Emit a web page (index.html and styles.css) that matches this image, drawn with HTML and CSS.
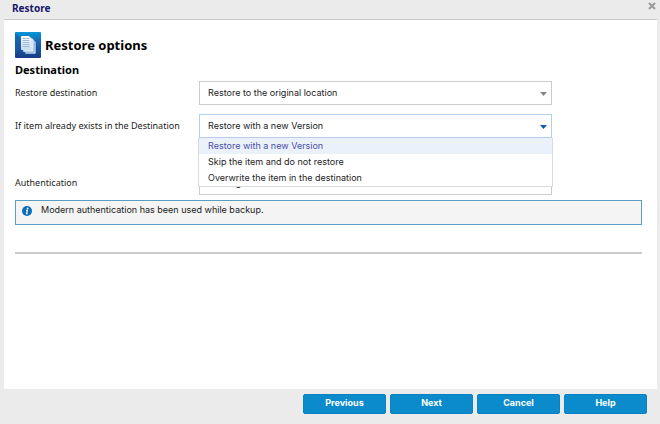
FILE: index.html
```html
<!DOCTYPE html>
<html lang="en">
<head>
<meta charset="utf-8">
<title>Restore</title>
<link rel="stylesheet" href="styles.css">
</head>
<body>
<div class="dialog">
  <header class="titlebar">
    <h1 class="titlebar-text">Restore</h1>
    <button class="close" type="button" aria-label="Close">
      <svg width="8" height="8" viewBox="0 0 8 8"><path d="M1 1L7 7M7 1L1 7" stroke="#999" stroke-width="2"/></svg>
    </button>
  </header>
  <main class="content">
    <div class="heading">
      <svg class="heading-icon" viewBox="0 0 26 26" aria-hidden="true">
        <defs>
          <linearGradient id="tile" x1="0" y1="0" x2="0" y2="1"><stop offset="0" stop-color="#0796d8"/><stop offset=".35" stop-color="#1769b4"/><stop offset="1" stop-color="#163b86"/></linearGradient>
          <linearGradient id="sheet" x1="0" y1="0" x2="0" y2="1"><stop offset="0" stop-color="#fff"/><stop offset="1" stop-color="#c5dcf0"/></linearGradient>
        </defs>
        <rect width="26" height="26" rx="1" fill="url(#tile)"/>
        <path d="M0 1L9 10L0 23Z" fill="#1a5ba9" opacity=".6"/>
        <path d="M11 8h8l2 2v11q0 1-1 1H11q-1 0-1-1V9q0-1 1-1z" fill="#b9d1ea" stroke="#174c91" stroke-width=".5"/>
        <path d="M9 6h8l2 2v11q0 1-1 1H9q-1 0-1-1V7q0-1 1-1z" fill="#d9e8f6" stroke="#5a88bd" stroke-width=".5"/>
        <path d="M7 4h7l2 2v11q0 1-1 1H7q-1 0-1-1V5q0-1 1-1z" fill="url(#sheet)"/>
        <path d="M7.500 6.500h7M7.500 8.500h7M7.500 10.500h7M7.500 12.500h7M7.500 14.500h7" stroke="#8dadcf" stroke-width=".8"/>
      </svg>
      <h2 class="heading-text">Restore options</h2>
    </div>
    <h3 class="section">Destination</h3>
    <form class="form">
      <div class="row">
        <label class="label" for="dest">Restore destination</label>
        <div class="field">
          <select class="select" id="dest"><option>Restore to the original location</option></select>
          <svg class="arrow" viewBox="0 0 7 4" aria-hidden="true"><path d="M0 0H7L3.500 4Z"/></svg>
        </div>
      </div>
      <div class="row row-tall">
        <label class="label" for="exists">If item already exists in the Destination</label>
        <div class="field">
          <select class="select select-open" id="exists"><option>Restore with a new Version</option><option>Skip the item and do not restore</option><option>Overwrite the item in the destination</option></select>
          <svg class="arrow arrow-open" viewBox="0 0 7 4" aria-hidden="true"><path d="M0 0H7L3.500 4Z"/></svg>
          <ul class="menu" role="listbox" aria-label="If item already exists in the Destination">
            <li class="option option-active" role="option" aria-selected="true">Restore with a new Version</li>
            <li class="option" role="option">Skip the item and do not restore</li>
            <li class="option" role="option">Overwrite the item in the destination</li>
          </ul>
        </div>
      </div>
      <div class="row">
        <label class="label" for="auth">Authentication</label>
        <div class="field">
          <select class="select" id="auth"><option>Existing</option></select>
        </div>
      </div>
    </form>
    <div class="notice">
      <svg class="notice-icon" viewBox="0 0 10 10" aria-hidden="true"><circle cx="5" cy="5" r="5" fill="#0b6db7"/><circle cx="5.600" cy="2.500" r=".9" fill="#fff"/><path d="M4 4.300H5.300L4.600 7.700H5.600" fill="none" stroke="#fff" stroke-width="1.200"/></svg>
      <p class="notice-text">Modern authentication has been used while backup.</p>
    </div>
    <hr class="rule">
  </main>
  <footer class="footer">
    <button class="button" type="button">Previous</button>
    <button class="button" type="button">Next</button>
    <button class="button" type="button">Cancel</button>
    <button class="button" type="button">Help</button>
  </footer>
</div>
</body>
</html>
```
FILE: styles.css
```css
* { box-sizing: border-box; }
body {
  margin: 0;
  background: #ebebeb;
  color: #222;
  font: 9px/16px Inter, "Liberation Sans", sans-serif;
}
h1, h2, h3, p, ul { margin: 0; padding: 0; }
.dialog {
  display: flex;
  flex-direction: column;
  min-height: 100vh;
  padding: 0 3px 0 4px;
}
.titlebar {
  display: flex;
  justify-content: space-between;
  align-items: flex-start;
  height: 19px;
  padding-left: 8px;
}
.titlebar-text {
  color: #17176b;
  font: bold 10px/16px "Noto Sans", sans-serif;
}
.close {
  display: flex;
  margin: 1px 0 0;
  padding: 1px;
  border: 0;
  background: none;
}
.content {
  flex: 1;
  padding: 12px 15px 0 11px;
  border-top: 1px solid #c9c9c9;
  background: #fff;
}
.heading { display: flex; align-items: center; gap: 4px; }
.heading-icon { width: 26px; height: 26px; }
.heading-text {
  color: #000;
  font: bold 13px/24px "Noto Sans", sans-serif;
}
.section {
  margin: 4px 0 3px;
  color: #000;
  font: bold 11px/16px "Noto Sans", sans-serif;
}
.row {
  display: grid;
  grid-template-columns: 184px minmax(0, 353px);
  height: 33px;
}
.row-tall { height: 57px; }
.label {
  color: #222;
  font: 9px/24px "Noto Sans", sans-serif;
}
.field { position: relative; }
.select {
  display: block;
  appearance: none;
  width: 100%;
  height: 24px;
  padding: 0 20px 0 8px;
  border: 1px solid #ccc;
  border-radius: 0;
  background: #fff;
  color: #222;
  font: inherit;
}
.select-open { border-color: #b4cfe9; }
.arrow {
  position: absolute;
  top: 11px;
  right: 5px;
  width: 7px;
  height: 4px;
  fill: #84898e;
  pointer-events: none;
}
.arrow-open { fill: #0c5ba6; }
.menu {
  position: absolute;
  top: 24px;
  right: -1px;
  left: -1px;
  z-index: 1;
  border: 1px solid #d5dae0;
  border-top: 0;
  background: #fff;
  list-style: none;
}
.option { padding: 0 9px; }
.option-active { background: #eaf1fb; color: #4a4fa8; }
.notice {
  display: flex;
  gap: 9px;
  height: 25px;
  margin-top: -4px;
  padding: 1px 6px;
  border: 1px solid #5a9fc0;
  background: #f4f4f4;
}
.notice-icon { width: 10px; height: 10px; margin-top: 4px; }
.notice-text { line-height: 16px; }
.rule {
  height: 2px;
  margin: 27px 0 0;
  border: 0;
  background: #ccc;
}
.footer {
  display: flex;
  justify-content: flex-end;
  gap: 4px;
  padding: 5px 10px 10px;
}
.button {
  width: 83px;
  height: 20px;
  padding: 0 0 2px;
  border: 1px solid #0a82c0;
  border-radius: 2px;
  background: #0b8bcc;
  color: #fff;
  font: bold 9px/16px Inter, "Liberation Sans", sans-serif;
}
```
